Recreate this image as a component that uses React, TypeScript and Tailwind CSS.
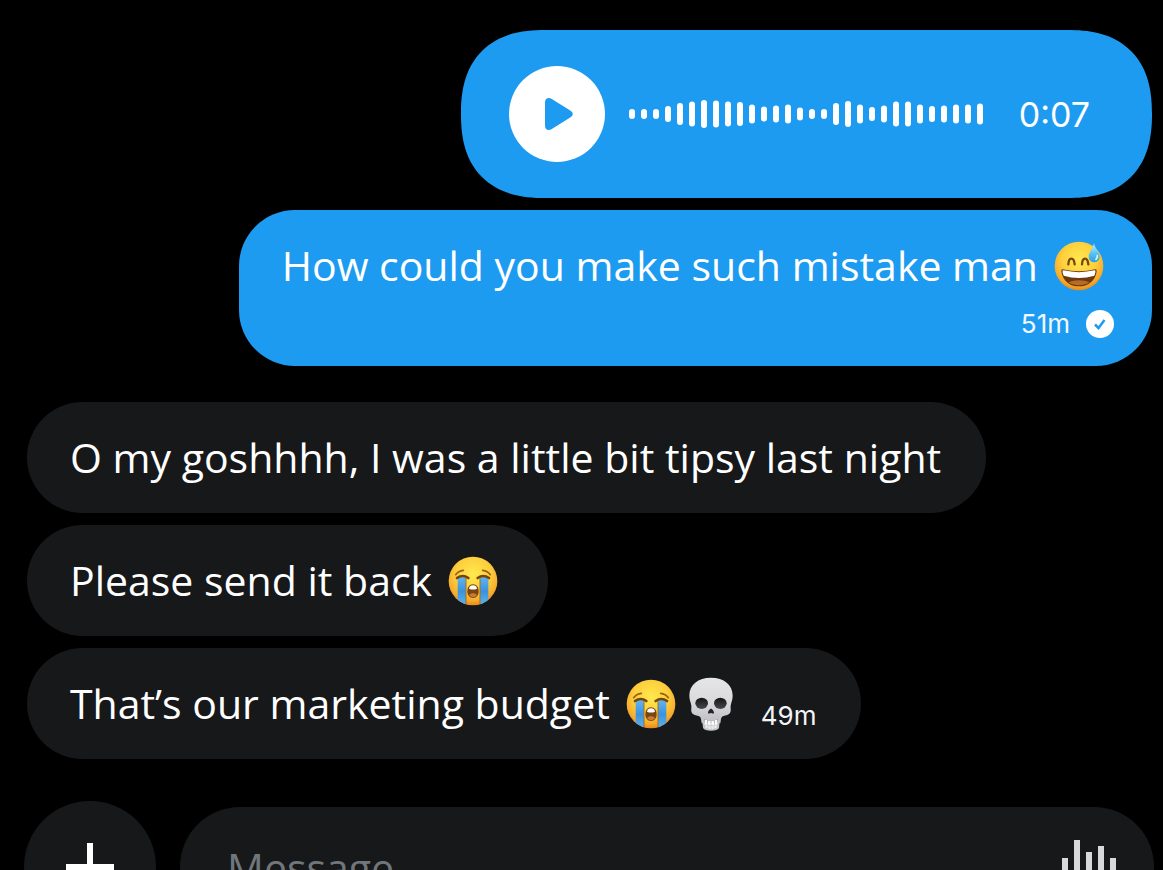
import type { ReactNode } from "react";

const WAVE = [
  10, 10, 10, 16, 22, 25, 28, 27, 25, 24, 19, 15, 17, 19, 13,
  10, 10, 22, 26, 19, 14, 17, 25, 25, 19, 16, 17, 19, 19, 21,
];

function FaceGradient({ id }: { id: string }) {
  return (
    <radialGradient id={id} cx="0.5" cy="0.36" r="0.64">
      <stop offset="0" stopColor="#ffe94f" />
      <stop offset="0.55" stopColor="#fdcf3c" />
      <stop offset="0.85" stopColor="#f7ab2c" />
      <stop offset="1" stopColor="#e58a1d" />
    </radialGradient>
  );
}

function SweatSmile() {
  return (
    <svg role="img" aria-label="grinning face with sweat" viewBox="0 0 150 150" className="mx-[5px] size-[50px] shrink-0">
      <defs>
        <FaceGradient id="sweat-face" />
        <linearGradient id="sweat-drop" x1="0" y1="0" x2="0" y2="1">
          <stop offset="0" stopColor="#c9f1ff" />
          <stop offset="0.5" stopColor="#5fc6f5" />
          <stop offset="1" stopColor="#2a9fe0" />
        </linearGradient>
      </defs>
      <circle cx="75" cy="75" r="73" fill="url(#sweat-face)" />
      <path d="M43 70c1-23 17-23 19 0M84 70c1-23 17-23 19 0" fill="none" stroke="#7a4709" strokeWidth="7" strokeLinecap="round" />
      <path d="M26 85q49 12 98 0q5 0 4 7c-5 28-25 44-53 44S27 120 22 92q-1-7 4-7z" fill="#6b3a0e" />
      <path d="M28 88q47 11 94 0q4 0 2 7l-3 9q-46 14-92 0l-3-9q-2-7 2-7z" fill="#fff" />
      <path d="M44 124c16-8 46-8 62 0c-9 7-19 9-31 9s-22-2-31-9z" fill="#b96a26" />
      <path d="M120 6c3 17 17 28 17 41a16.500 17 0 0 1-33 0c0-13 13-24 16-41z" fill="url(#sweat-drop)" />
      <path d="M126 55q5-5 4-11" stroke="#d9f6ff" strokeWidth="5" strokeLinecap="round" fill="none" />
    </svg>
  );
}

function Sob({ id }: { id: string }) {
  return (
    <svg role="img" aria-label="loudly crying face" viewBox="0 0 150 150" className="mx-[5px] size-[50px] shrink-0">
      <defs>
        <FaceGradient id={`${id}-face`} />
        <linearGradient id={`${id}-tear`} x1="0" y1="0" x2="0" y2="1">
          <stop offset="0" stopColor="#62b4f0" />
          <stop offset="0.5" stopColor="#3b93de" />
          <stop offset="1" stopColor="#5fb4ee" />
        </linearGradient>
        <clipPath id={`${id}-clip`}>
          <circle cx="75" cy="75" r="73" />
        </clipPath>
      </defs>
      <circle cx="75" cy="75" r="73" fill={`url(#${id}-face)`} />
      <g clipPath={`url(#${id}-clip)`}>
        <path d="M29 66q14-7 25 1v83H29zM96 67q12-8 25-1v84H96z" fill={`url(#${id}-tear)`} />
        <path d="M54 67v83M96 67v83" stroke="#a66d27" strokeWidth="3" />
      </g>
      <path d="M27 66q17-12 34 0M89 66q17-12 34 0" fill="none" stroke="#75450b" strokeWidth="8" strokeLinecap="round" />
      <path d="M23 56q8-11 23-13M127 56q-8-11-23-13" fill="none" stroke="#9a6111" strokeWidth="5" strokeLinecap="round" />
      <path d="M75 85c11 0 17 9 17 21s-6 20-17 20-17-8-17-20 6-21 17-21z" fill="#7a4511" />
      <path d="M63 98c1-7 6-10 12-10s11 3 12 10q-12 5-24 0z" fill="#fff" />
      <path d="M63 117c6-7 18-7 24 0q-5 7-12 7t-12-7z" fill="#c97b33" />
    </svg>
  );
}

function Skull() {
  return (
    <svg role="img" aria-label="skull" viewBox="0 0 132 162" className="mx-2 h-[54px] w-[44px] shrink-0">
      <defs>
        <linearGradient id="skull-bone" x1="0" y1="0" x2="0" y2="1">
          <stop offset="0" stopColor="#e6e6e8" />
          <stop offset="0.6" stopColor="#d8d8db" />
          <stop offset="1" stopColor="#bdbdc1" />
        </linearGradient>
        <linearGradient id="skull-eye" x1="0" y1="0" x2="0" y2="1">
          <stop offset="0" stopColor="#141416" />
          <stop offset="1" stopColor="#48484c" />
        </linearGradient>
      </defs>
      <path d="M66 2c39 0 65 21 65 54c0 13-5 20-6 30c-1 11 3 18-5 25c-6 5-16 4-21 8c-4 4-3 11-5 20H38c-2-9-1-16-5-20c-5-4-15-3-21-8c-8-7-4-14-5-25C6 76 1 69 1 56C1 23 27 2 66 2z" fill="url(#skull-bone)" />
      <path d="M39 122q27 8 54 0l-3 31q-5 8-24 8t-24-8z" fill="#c5c5c9" />
      <ellipse cx="38" cy="79" rx="19" ry="17" fill="url(#skull-eye)" />
      <ellipse cx="94" cy="79" rx="19" ry="17" fill="url(#skull-eye)" />
      <path d="M66 95c4 0 9 8 9 12s-6 3-9 0c-3 3-9 4-9 0s5-12 9-12z" fill="#252527" />
      <path d="M45 127q21 7 42 0v9q-21 6-42 0z" fill="#98989d" />
      <path d="M47 129h8v14h-8zM57 131h8v14h-8zM67 131h8v14h-8zM77 129h8v14h-8z" fill="#fafafa" />
      <path d="M49 145h7v9h-7zM58 147h7v10h-7zM67 147h7v10h-7zM76 145h7v9h-7z" fill="#ececee" />
    </svg>
  );
}

function Received({ children, time }: { children: ReactNode; time?: string }) {
  return (
    <li className="flex items-end gap-5 self-start rounded-[56px] bg-[#16181a] py-[27px] pr-[45px] pl-[43px]">
      <p className="flex items-center gap-[11px] leading-[57px]">{children}</p>
      {time && <time className="font-['Inter',sans-serif] text-[26px] leading-8 text-gray-100">{time}</time>}
    </li>
  );
}

function VoiceMessage() {
  return (
    <li className="flex items-center self-end rounded-[84px] bg-[#1d9bf0] py-9 pr-[62px] pl-12 [corner-shape:superellipse(1.27)]">
      <button type="button" aria-label="Play voice message" className="flex size-24 items-center justify-center rounded-full bg-white">
        <svg viewBox="0 0 96 96" className="size-24" fill="#1d9bf0">
          <path d="M36 36.500q0-4.500 4-4.500q1.200 0 2.400.8l19.200 12q2.200 1.500 2.200 3.200t-2.200 3.200l-19.200 12q-1.200.8-2.400.8q-4 0-4-4.500z" />
        </svg>
      </button>
      <svg viewBox="0 0 354 30" className="ml-6 h-[30px] w-[354px]" fill="#fff" aria-hidden="true">
        {WAVE.map((h, i) => (
          <rect key={i} x={i * 12} y={15 - h / 2} width="6" height={h} rx="3" />
        ))}
      </svg>
      <span className="ml-9 font-['Inter',sans-serif] text-[34px]">0:07</span>
    </li>
  );
}

export default function App() {
  return (
    <main className="flex h-screen flex-col overflow-hidden bg-black pt-[30px] font-['Open_Sans',sans-serif] text-[41px] whitespace-nowrap text-white">
      <ul className="flex shrink-0 flex-col gap-3 pr-[11px] pl-[27px]">
        <VoiceMessage />
        <li className="flex flex-col self-end rounded-[56px] bg-[#1d9bf0] pt-[27px] pb-[26px]">
          <p className="flex items-center gap-[11px] px-[43px] leading-[57px]">
            How could you make such mistake man
            <SweatSmile />
          </p>
          <div className="mt-3.5 flex items-center justify-end gap-4 pr-[38px]">
            <time className="font-['Inter',sans-serif] text-[26px] leading-8 text-sky-50">51m</time>
            <svg role="img" aria-label="Sent" viewBox="0 0 28 28" className="size-7">
              <circle cx="14" cy="14" r="14" fill="#fff" />
              <path d="M9 14.500l3.500 3.500l6-8" fill="none" stroke="#1d9bf0" strokeWidth="2.500" />
            </svg>
          </div>
        </li>
      </ul>

      <ul className="mt-9 flex shrink-0 flex-col gap-3 pr-[11px] pl-[27px]">
        <Received>O my goshhhh, I was a little bit tipsy last night</Received>
        <Received>
          Please send it back
          <Sob id="sob-a" />
        </Received>
        <Received time="49m">
          That’s our marketing budget
          <span className="flex items-center">
            <Sob id="sob-b" />
            <Skull />
          </span>
        </Received>
      </ul>

      <form className="mt-[42px] flex shrink-0 items-center gap-6 pr-[9px] pl-6" onSubmit={(e) => e.preventDefault()}>
        <button type="button" aria-label="Add attachment" className="flex size-[132px] shrink-0 items-center justify-center rounded-full bg-[#16181a]">
          <svg viewBox="0 0 48 48" className="size-12" fill="#fff">
            <path d="M21 0h6v21h21v6H27v21h-6V27H0v-6h21z" />
          </svg>
        </button>
        <div className="flex h-[120px] min-w-0 flex-1 items-center rounded-[60px] bg-[#16181a] pr-[38px] pl-[47px]">
          <input
            type="text"
            aria-label="Message"
            placeholder="Message"
            className="min-w-0 flex-1 bg-transparent leading-[57px] outline-none placeholder:text-[#71767b]"
          />
          <button type="button" aria-label="Record voice message">
            <svg viewBox="0 0 54 54" className="size-[54px]" fill="#d9d9db">
              <path d="M0 18h6v18H0zM12 0h6v54h-6zM24 12h6v30h-6zM36 6h6v42h-6zM48 18h6v18h-6z" />
            </svg>
          </button>
        </div>
      </form>
    </main>
  );
}
